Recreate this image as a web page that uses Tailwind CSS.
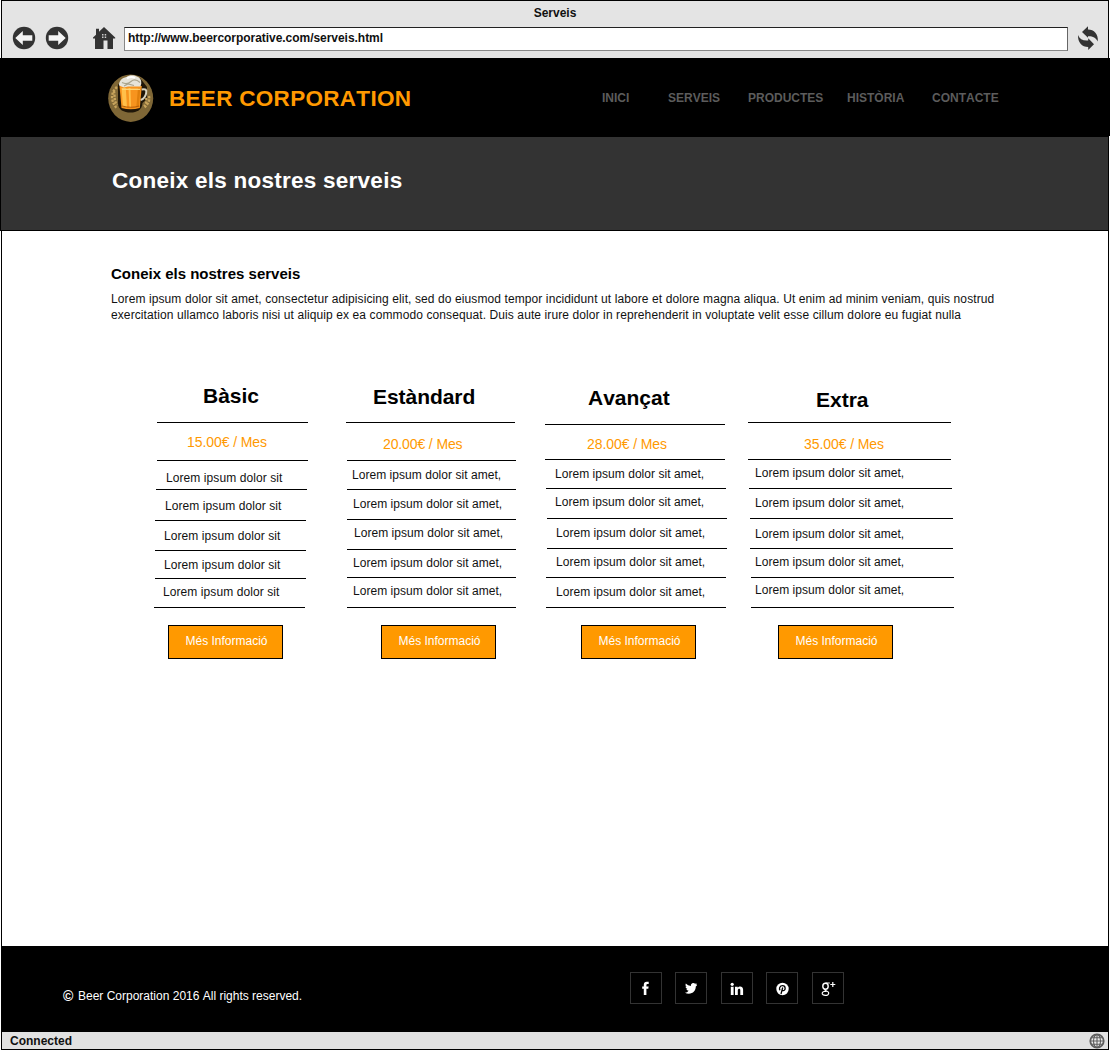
<!DOCTYPE html>
<html lang="ca">
<head>
<meta charset="utf-8">
<title>Serveis</title>
<script src="https://cdn.jsdelivr.net/npm/@tailwindcss/browser@4"></script>
</head>
<body class="bg-white font-['Liberation_Sans',Arial,sans-serif] text-xs leading-4 text-[#111] whitespace-nowrap [font-kerning:none]">
<div class="flex h-[1050px] w-[1110px] flex-col">

  <!-- Browser chrome -->
  <div class="ml-px h-[58px] w-[1108px] border border-b-0 border-black bg-[#e4e4e4]">
    <div class="h-[25px] pt-1 text-center font-bold">Serveis</div>
    <div class="flex">
      <svg class="ml-[10px] h-6 w-6" viewBox="0 0 24 24"><circle cx="12" cy="12" r="11.2" fill="#333"/><path d="M3.300 12 10.800 5v4.300H20.300v5.400H10.800V19z" fill="#f4f4f4"/></svg>
      <svg class="ml-[9px] h-6 w-6" viewBox="0 0 24 24"><circle cx="12" cy="12" r="11.2" fill="#333"/><path d="M20.700 12 13.200 5v4.300H3.700v5.400H13.200V19z" fill="#f4f4f4"/></svg>
      <svg class="ml-[23px] h-6 w-6" viewBox="0 0 24 24"><path d="M12 1 23.200 11.500v1H21V23h-5.500v-8.500h-4V23H3V12.500H1v-1L4 8.700V2.800h3v3z" fill="#333"/><path d="M10 8h1.500v1.500H10zm2.700 0h1.500v1.500h-1.500zM10 10.500h1.500V12H10zm2.700 0h1.500V12h-1.500z" fill="#ccc"/></svg>
      <div class="ml-[8px] mt-px h-6 w-[944px] border border-b-[#888] border-l-[#888] border-r-[#666] border-t-[#222] bg-white pl-[3px] pt-[2px] font-bold tracking-[-0.04px]">http://www.beercorporative.com/serveis.html</div>
      <svg class="ml-[9px] h-6 w-[22px]" viewBox="0 0 22 24"><path d="M5 6 11 .3v3.200C17 3.500 21.500 8 20.800 15.500 19 11.500 15.500 10 11 10.200v1.600zM17 18.300 11.200 24v-3C5 21 .5 16.500 1.100 9c1.500 4.200 5 6 10.100 5.500v-2.300z" fill="#333"/></svg>
    </div>
  </div>

  <!-- Site header -->
  <header class="flex h-[78px] w-[1110px] bg-black">
    <svg class="ml-[108px] mt-4 h-12 w-[46px]" viewBox="0 0 46 48">
      <ellipse cx="22.700" cy="24.200" rx="22.500" ry="23.700" fill="#7f6736"/>
      <path d="M10 10.500V29c0 7 6 9.500 12.500 9.500S34 36 34.500 29l4.500-4V13L32 4z" fill="#1f1608"/>
      <g fill="none" stroke="#c8a45c" stroke-width="2.300" stroke-dasharray="2.300 1.200"><path d="M9 13C3 18 2 26 8.500 34M6 17c1 5 0 10 3 14"/><path d="M41 22c1 5-1 8-5 12M38 24c1 3 0 6-2 8"/></g>
      <path d="M33.500 15.500c4-1 5.500 0 4.600 4-.7 3.500-2.600 5.500-5.600 6.500" fill="none" stroke="#d8d4c0" stroke-width="2"/>
      <path d="M11.500 12h22.300l-2 22q-9 2.500-18.300 0z" fill="#f7941e"/>
      <path d="M13.500 14h4.300l1.200 19.500-4-.7zM20.500 14h2l.5 19.700h-1.600z" fill="#ffc04a"/>
      <path d="M30 14h2.300l-1.500 18.700-2.500.6z" fill="#e07f0c"/>
      <path d="M14 15.300h18" stroke="#ffd77a" stroke-width="1.300"/>
      <path d="M14.200 32q8.800 2.500 17 0" fill="none" stroke="#b95f08" stroke-width="1.200"/>
      <path d="M11 11.500c0-5 3-7.500 7.500-8.500C21 .8 26 1 29 2.500c3 1 4.500 3 4.300 7l-.8 3H20l-4 1z" fill="#e6e4da"/>
      <path d="M14 8.500q5 2.500 9-1t9 1M16 12l4-2 6 1.500" fill="none" stroke="#aaa58e" stroke-width="1.200"/>
      <path d="M19 4.300q4-2.500 8-.5" fill="none" stroke="#fff" stroke-width="2"/>
    </svg>
    <div class="ml-[15px] mt-[28px] w-[433px] text-[22.5px] leading-[26px] font-bold tracking-[0.3px] text-[#ff9900]">BEER CORPORATION</div>
    <nav class="flex pt-8 font-bold text-[#5c5c5c]">
      <a class="w-[66px]">INICI</a>
      <a class="w-[80px]">SERVEIS</a>
      <a class="w-[99px]">PRODUCTES</a>
      <a class="w-[85px]">HISTÒRIA</a>
      <a>CONTACTE</a>
    </nav>
  </header>

  <!-- Page title -->
  <section class="h-[95px] w-[1109px] border border-black bg-[#333]">
    <h1 class="ml-[111px] mt-[31px] text-[22.5px] leading-[26px] font-bold tracking-[0.25px] text-white">Coneix els nostres serveis</h1>
  </section>

  <main class="ml-px h-[715px] w-[1108px] border-x border-black bg-white">
    <h2 class="ml-[109px] pt-[34px] text-[15px] leading-[18px] font-bold text-black">Coneix els nostres serveis</h2>
    <p class="ml-[109px] mt-[8px] tracking-[0.1px]">Lorem ipsum dolor sit amet, consectetur adipisicing elit, sed do eiusmod tempor incididunt ut labore et dolore magna aliqua. Ut enim ad minim veniam, quis nostrud<br>exercitation ullamco laboris nisi ut aliquip ex ea commodo consequat. Duis aute irure dolor in reprehenderit in voluptate velit esse cillum dolore eu fugiat nulla</p>

    <!-- Pricing plans -->
    <div class="ml-[152px] mt-[57px] flex indent-px">
      <div class="mr-[38px] w-[154px] tracking-[0.08px]">
        <h3 class="ml-[3px] h-[43px] w-[151px] border-b border-black pl-[45px] pt-[4px] text-[21px] leading-6 font-bold tracking-normal text-black">Bàsic</h3>
        <div class="ml-[3px] h-[38px] w-[151px] border-b border-black pl-[30px] pt-[11px] indent-0 text-sm leading-4 tracking-[-0.08px] text-[#ff9900]">15.00€ / Mes</div>
        <div class="ml-[2px] h-[29px] w-[151px] border-b border-black pl-[9px] pt-[9px]">Lorem ipsum dolor sit</div>
        <div class="ml-[1px] h-[31px] w-[151px] border-b border-black pl-[9px] pt-[8px]">Lorem ipsum dolor sit</div>
        <div class="ml-[1px] h-[30px] w-[151px] border-b border-black pl-[8px] pt-[7px]">Lorem ipsum dolor sit</div>
        <div class="ml-[1px] h-[28px] w-[151px] border-b border-black pl-[8px] pt-[6px]">Lorem ipsum dolor sit</div>
        <div class="h-[29px] w-[151px] border-b border-black pl-[8px] pt-[5px]">Lorem ipsum dolor sit</div>
        <button class="ml-[14px] mt-[17px] block h-[34px] w-[115px] border border-black bg-[#ff9900] pb-[2px] pl-[2px] tracking-normal text-white">Més Informació</button>
      </div>
      <div class="mr-[29px] w-[170px] tracking-[0.04px]">
        <h3 class="h-[43px] w-[169px] border-b border-black pl-[26px] pt-[5px] text-[21px] leading-6 font-bold tracking-[-0.05px] text-black">Estàndard</h3>
        <div class="ml-[1px] h-[38px] w-[169px] border-b border-black pl-[36px] pt-[13px] indent-0 text-sm leading-4 tracking-[-0.12px] text-[#ff9900]">20.00€ / Mes</div>
        <div class="ml-[1px] h-[29px] w-[169px] border-b border-black pl-[4px] pt-[6px]">Lorem ipsum dolor sit amet,</div>
        <div class="ml-[1px] h-[30px] w-[169px] border-b border-black pl-[5px] pt-[6px]">Lorem ipsum dolor sit amet,</div>
        <div class="ml-[1px] h-[30px] w-[169px] border-b border-black pl-[6px] pt-[5px]">Lorem ipsum dolor sit amet,</div>
        <div class="ml-[1px] h-[28px] w-[169px] border-b border-black pl-[5px] pt-[5px]">Lorem ipsum dolor sit amet,</div>
        <div class="ml-[1px] h-[30px] w-[169px] border-b border-black pl-[5px] pt-[5px]">Lorem ipsum dolor sit amet,</div>
        <button class="ml-[35px] mt-[17px] block h-[34px] w-[115px] border border-black bg-[#ff9900] pb-[2px] pl-[2px] tracking-normal text-white">Més Informació</button>
      </div>
      <div class="mr-[21px] w-[182px] tracking-[0.04px]">
        <h3 class="h-[45px] w-[180px] border-b border-black pl-[42px] pt-[6px] text-[21px] leading-6 font-bold tracking-normal text-black">Avançat</h3>
        <div class="h-[35px] w-[180px] border-b border-black pl-[42px] pt-[11px] indent-0 text-sm leading-4 tracking-[-0.08px] text-[#ff9900]">28.00€ / Mes</div>
        <div class="ml-[1px] h-[29px] w-[180px] border-b border-black pl-[8px] pt-[6px]">Lorem ipsum dolor sit amet,</div>
        <div class="ml-[2px] h-[30px] w-[180px] border-b border-black pl-[7px] pt-[5px]">Lorem ipsum dolor sit amet,</div>
        <div class="ml-[2px] h-[30px] w-[180px] border-b border-black pl-[8px] pt-[6px]">Lorem ipsum dolor sit amet,</div>
        <div class="ml-[1px] h-[29px] w-[180px] border-b border-black pl-[9px] pt-[5px]">Lorem ipsum dolor sit amet,</div>
        <div class="ml-[1px] h-[30px] w-[180px] border-b border-black pl-[9px] pt-[6px]">Lorem ipsum dolor sit amet,</div>
        <button class="ml-[36px] mt-[17px] block h-[34px] w-[115px] border border-black bg-[#ff9900] pb-[2px] pl-[2px] tracking-normal text-white">Més Informació</button>
      </div>
      <div class="w-[206px] tracking-[0.04px]">
        <h3 class="h-[43px] w-[203px] border-b border-black pl-[67px] pt-[8px] text-[21px] leading-6 font-bold tracking-normal text-black">Extra</h3>
        <div class="h-[37px] w-[203px] border-b border-black pl-[56px] pt-[13px] indent-0 text-sm leading-4 tracking-[-0.08px] text-[#ff9900]">35.00€ / Mes</div>
        <div class="ml-[1px] h-[29px] w-[203px] border-b border-black pl-[5px] pt-[5px]">Lorem ipsum dolor sit amet,</div>
        <div class="ml-[2px] h-[30px] w-[203px] border-b border-black pl-[4px] pt-[6px]">Lorem ipsum dolor sit amet,</div>
        <div class="ml-[2px] h-[30px] w-[203px] border-b border-black pl-[4px] pt-[7px]">Lorem ipsum dolor sit amet,</div>
        <div class="ml-[3px] h-[29px] w-[203px] border-b border-black pl-[3px] pt-[5px]">Lorem ipsum dolor sit amet,</div>
        <div class="ml-[3px] h-[30px] w-[203px] border-b border-black pl-[3px] pt-[4px]">Lorem ipsum dolor sit amet,</div>
        <button class="ml-[30px] mt-[17px] block h-[34px] w-[115px] border border-black bg-[#ff9900] pb-[2px] pl-[2px] tracking-normal text-white">Més Informació</button>
      </div>
    </div>
  </main>

  <!-- Footer -->
  <footer class="ml-px flex h-[86px] w-[1108px] bg-black text-white">
    <div class="ml-[62px] mt-[42px] flex w-[567px]"><span class="w-[15px] text-[14px] font-bold">©</span>Beer Corporation 2016 All rights reserved.</div>
    <div class="mt-[26px] flex gap-[13px]">
      <a class="h-8 w-8 border border-[#333]"><svg class="h-[30px] w-[30px]" viewBox="0 0 30 30"><path d="M12.800 22v-6.200h-1.600v-2.300h1.600v-1.700c0-2.100 1.100-3 2.900-3h2v2.300h-1.300c-.7 0-1 .3-1 .9v1.500h2.200l-.3 2.300h-1.900V22z" fill="#fff"/></svg></a>
      <a class="h-8 w-8 border border-[#333]"><svg class="h-[30px] w-[30px]" viewBox="0 0 30 30"><g transform="translate(9 9.900) scale(.5)"><path d="M23.950 2.570a10 10 0 0 1-2.820.770 4.960 4.960 0 0 0 2.160-2.720c-.950.550-2 .950-3.130 1.180a4.920 4.920 0 0 0-8.380 4.480A14 14 0 0 1 1.640 1.150a4.920 4.920 0 0 0 1.520 6.570 5 5 0 0 1-2.220-.600v.060a4.920 4.920 0 0 0 3.940 4.820 5 5 0 0 1-2.210.080 4.930 4.930 0 0 0 4.600 3.420A9.870 9.870 0 0 1 0 19.540a14 14 0 0 0 7.550 2.200c9.050 0 14-7.500 14-13.980 0-.210 0-.420-.020-.630a10 10 0 0 0 2.420-2.560z" fill="#fff"/></g></svg></a>
      <a class="ml-px h-8 w-8 border border-[#333]"><svg class="h-[30px] w-[30px]" viewBox="0 0 30 30"><circle cx="10.200" cy="11.300" r="1.600" fill="#fff"/><path d="M8.800 13.700h2.800V22H8.800zM13 13.700h2.700v1.100c1.300-2 5.400-1.900 5.400 1.800V22h-2.800v-4.800c0-2.200-2.500-1.900-2.500 0V22H13z" fill="#fff"/></svg></a>
      <a class="h-8 w-8 border border-[#333]"><svg class="h-[30px] w-[30px]" viewBox="0 0 30 30"><circle cx="15.500" cy="16" r="6.200" fill="#fff"/><path d="M13.200 17.300c-1.600-1.500-.5-4.600 2.400-4.600 3.400 0 3.200 5 .5 5-1 0-1.300-.6-1.300-.6M15.700 14.500l-1.700 6.500" fill="none" stroke="#000" stroke-width="1.300"/></svg></a>
      <a class="ml-px h-8 w-8 border border-[#333]"><svg class="h-[30px] w-[30px]" viewBox="0 0 30 30"><g fill="none" stroke="#fff"><ellipse cx="12.500" cy="13.200" rx="2.700" ry="3" stroke-width="1.400"/><path d="M12.500 10h4.300M12 16.200c-1.600 1.400 3.600 1.400 3.700 3.700 0 3.400-7 3.200-6.500.2.300-1.700 2.800-2 4.300-1.700M17.300 11.500h5M19.800 9v5" stroke-width="1.200"/></g></svg></a>
    </div>
  </footer>

  <!-- Status bar -->
  <div class="ml-px flex h-[18px] w-[1108px] justify-between border border-t-0 border-black bg-[#e1e1e1] pl-[8px] pr-[3px] font-bold">
    <span class="pt-px">Connected</span>
    <svg class="mt-px h-4 w-4" viewBox="0 0 16 16"><circle cx="8" cy="8" r="7" fill="#ececec"/><g fill="none" stroke="#5e5e5e" stroke-width="1.100"><circle cx="8" cy="8" r="6.700" stroke-width="1.800"/><ellipse cx="8" cy="8" rx="3.500" ry="6.500"/><path d="M8 1v14M1 8h14M2 4.700h12M2 11.300h12"/></g></svg>
  </div>
</div>
</body>
</html>
